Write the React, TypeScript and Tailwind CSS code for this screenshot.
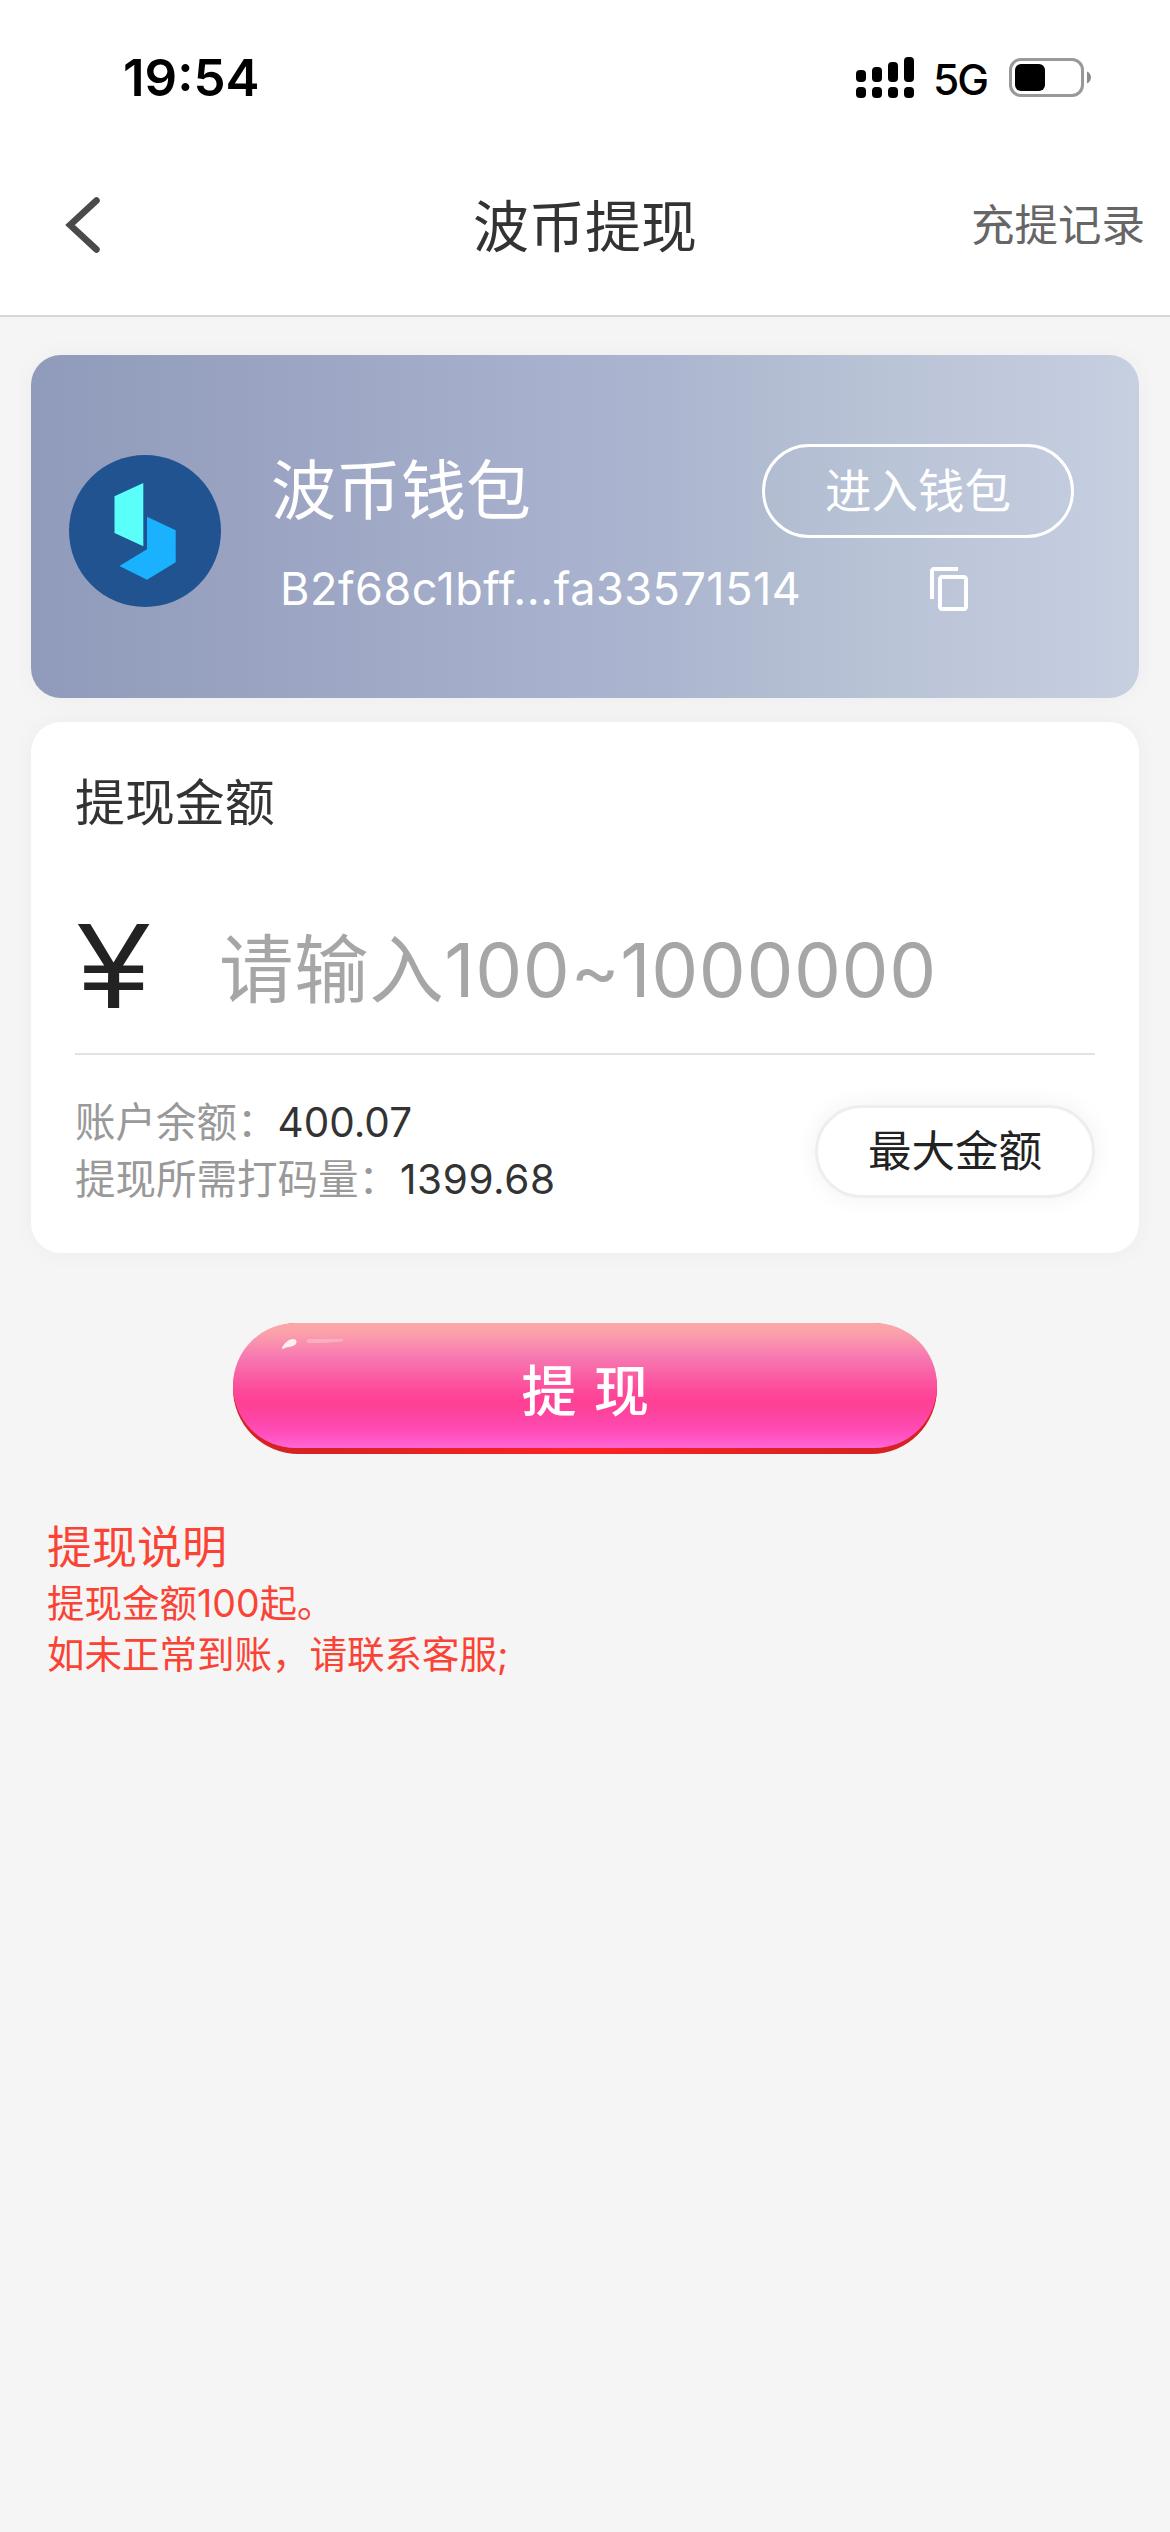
import { useState } from 'react';

const BALANCE = 400.07;
const REQUIRED_TURNOVER = 1399.68;
const ADDRESS = 'B2f68c1bff...fa33571514';

const NOTES = ['提现金额100起。', '如未正常到账，请联系客服;'];

// top of each upper bar, in svg units
const SIGNAL_BARS = [13, 10, 5, 0];

function SignalIcon({ className }: { className?: string }) {
  return (
    <svg viewBox="0 0 58 41" className={className} fill="currentColor">
      {SIGNAL_BARS.map((top, i) => (
        <g key={top}>
          <rect x={i * 16} y={top} width="10" height={25 - top} rx="4" />
          <rect x={i * 16} y="30" width="10" height="11" rx="4" />
        </g>
      ))}
    </svg>
  );
}

function BatteryIcon({ className }: { className?: string }) {
  return (
    <svg viewBox="0 0 83 40" className={className}>
      <rect x="1.5" y="1.5" width="72" height="36" rx="10.5" fill="none" stroke="#999" strokeWidth="3" />
      <rect x="6" y="6" width="30" height="27" rx="6" fill="#000" />
      <path d="M78 13.5c2.6 1.2 4 3.4 4 6s-1.4 4.8-4 6Z" fill="#8c8c8c" />
    </svg>
  );
}

function BackIcon({ className }: { className?: string }) {
  return (
    <svg viewBox="0 0 36 58" className={className} fill="none">
      <path
        d="M31.5 4.5 5 29l26.5 24.5"
        stroke="#4a4a4a"
        strokeWidth="6.5"
        strokeLinecap="round"
        strokeLinejoin="miter"
      />
    </svg>
  );
}

function WalletLogo({ className }: { className?: string }) {
  return (
    <svg viewBox="0 0 152 152" className={className}>
      <circle cx="76" cy="76" r="76" fill="#205390" />
      <path d="M45.5 41.3 74.3 28v63.3L45.5 78Z" fill="#5bfff9" />
      <path d="M78 61.7 106.7 75.3v32L78 124.7 50.4 111 78 94.3Z" fill="#1ab2ff" />
    </svg>
  );
}

function CopyIcon({ className }: { className?: string }) {
  return (
    <svg viewBox="0 0 24 24" className={className} fill="currentColor">
      <path d="M16 1H4c-1.1 0-2 .9-2 2v14h2V3h12V1zm3 4H8c-1.1 0-2 .9-2 2v14c0 1.1.9 2 2 2h11c1.1 0 2-.9 2-2V7c0-1.1-.9-2-2-2zm0 16H8V7h11v14z" />
    </svg>
  );
}

function ButtonShine({ className }: { className?: string }) {
  return (
    <svg viewBox="0 0 64 14" className={className}>
      <path d="M1 10C3 5 8 1 12 1c4.5 0 4.5 5 1 6.5C9 9 6 9 3 10.500 1.500 11.200.5 11 1 10Z" fill="#fff" opacity=".85" />
      <path d="M28 1h32c3 0 3 2 0 2.5C50 5 38 5 28 5c-3 0-3-4 0-4Z" fill="#fff" opacity=".25" />
    </svg>
  );
}

function StatusBar() {
  return (
    <div className="flex h-[141px] items-start justify-between pr-[78px] pl-[123px] text-black">
      <div className="mt-[47px] text-[51px] leading-[62px] font-semibold">19:54</div>
      <div className="mt-[57px] flex h-[42px] items-center">
        <SignalIcon className="mb-px h-[41px] w-[58px]" />
        <div className="mt-[3px] ml-[19px] w-[56px] text-[42.5px] leading-[42px] font-medium tracking-[-2px]">5G</div>
        <BatteryIcon className="ml-[20px] h-[40px] w-[83px]" />
      </div>
    </div>
  );
}

function Header() {
  return (
    <header className="grid h-[176px] grid-cols-[1fr_auto_1fr] items-center border-b-2 border-[#d6d6d6] px-[25px] pb-[6px]">
      <button aria-label="返回" className="pl-[40px]">
        <BackIcon className="h-[58px] w-[36px]" />
      </button>
      <h1 className="pt-[4px] text-[56px] leading-[80px] text-[#333]">波币提现</h1>
      <button className="justify-self-end text-[43.5px] leading-[60px] text-[#666]">充提记录</button>
    </header>
  );
}

function WalletCard() {
  return (
    <section className="flex h-[343px] items-center rounded-[30px] bg-[linear-gradient(90deg,#909aba_0%,#acb5d0_57%,#b1bcd1_66%,#b9c4d7_78%,#bec6da_84%,#c6d0e1_100%)] pl-[38px] text-white shadow-[0_0_24px_rgba(0,0,0,0.04)]">
      <WalletLogo className="mt-[9px] h-[152px] w-[152px] shrink-0" />
      <div className="ml-[50px] flex flex-1 flex-col pt-[6px]">
        <div className="flex items-center justify-between pr-[65px]">
          <div className="text-[65px] leading-[94px]">波币钱包</div>
          <button className="h-[94px] w-[312px] rounded-full border-[3.5px] border-white text-[46.5px] leading-[86px]">
            进入钱包
          </button>
        </div>
        <div className="mt-[24px] flex items-center pl-[9px]">
          <div className="w-[646px] text-[45px] leading-[54px] tracking-[0.5px]">{ADDRESS}</div>
          <button aria-label="复制">
            <CopyIcon className="h-[48px] w-[48px]" />
          </button>
        </div>
      </div>
    </section>
  );
}

function AmountCard() {
  const [amount, setAmount] = useState('');

  return (
    <section className="mt-[24px] h-[531px] rounded-[30px] bg-white px-[44px] pt-[46px] shadow-[0_0_24px_rgba(0,0,0,0.04)]">
      <div className="text-[49.9px] leading-[70px] text-[#333]">提现金额</div>
      <div className="mt-[57px] flex h-[160px] items-center border-b-2 border-[#e2e2e2] pb-[8px]">
        <div className="w-[144px] shrink-0 pb-[8px] pl-[3px]">
          <span className="inline-block origin-left scale-x-105 font-['Liberation_Sans',sans-serif] text-[122px] leading-[140px] text-[#222]">
            ¥
          </span>
        </div>
        <input
          className="h-[110px] min-w-0 flex-1 text-[74.5px] leading-[110px] tracking-[0.6px] outline-none placeholder:text-[#a6a6a6]"
          placeholder="请输入100~1000000"
          value={amount}
          onChange={(e) => setAmount(e.target.value)}
        />
      </div>
      <div className="mt-[39px] flex items-center justify-between">
        <div className="text-[40.5px] leading-[57px] text-[#999]">
          <div>
            账户余额：<span className="text-[#333]">{BALANCE}</span>
          </div>
          <div>
            提现所需打码量：<span className="ml-px tracking-[0.6px] text-[#333]">{REQUIRED_TURNOVER}</span>
          </div>
        </div>
        <button
          className="h-[93px] w-[280px] rounded-full border-[3px] border-[#eee] text-[43.5px] leading-[86px] text-[#222] shadow-[0_0_24px_rgba(0,0,0,0.06)]"
          onClick={() => setAmount(String(BALANCE))}
        >
          最大金额
        </button>
      </div>
    </section>
  );
}

function SubmitButton() {
  return (
    <button className="relative mx-auto mt-[70px] block h-[131px] w-[704px] rounded-full bg-linear-to-r from-[#d62222] from-10% via-[#ff2222] to-[#d62222] to-90% pb-[6px]">
      <div className="h-[125px] rounded-full bg-[linear-gradient(#fca8a8_0%,#fb9fab_9%,#f779b1_27%,#fd4899_55%,#ff4095_64%,#fd449f_73%,#ff4cb9_87%,#ff66d6_100%)] pl-[2px] text-[55px] leading-[136px] font-medium tracking-[1.5px] text-white">
        提 现
      </div>
      <ButtonShine className="absolute top-[15px] left-[48px] h-[14px] w-[64px]" />
    </button>
  );
}

export default function App() {
  return (
    <div className="h-[2532px] w-[1170px] overflow-hidden bg-[#f5f5f5] font-['Inter','Noto_Sans_CJK_SC',sans-serif]">
      <div className="bg-white">
        <StatusBar />
        <Header />
      </div>
      <main className="px-[31px] pt-[38px]">
        <WalletCard />
        <AmountCard />
        <SubmitButton />
        <div className="mt-[63px] pl-[16px] text-[37.5px] leading-[51px] text-[#fa4334]">
          <div className="text-[45px] leading-[61px]">提现说明</div>
          {NOTES.map((note) => (
            <p key={note}>{note}</p>
          ))}
        </div>
      </main>
    </div>
  );
}
